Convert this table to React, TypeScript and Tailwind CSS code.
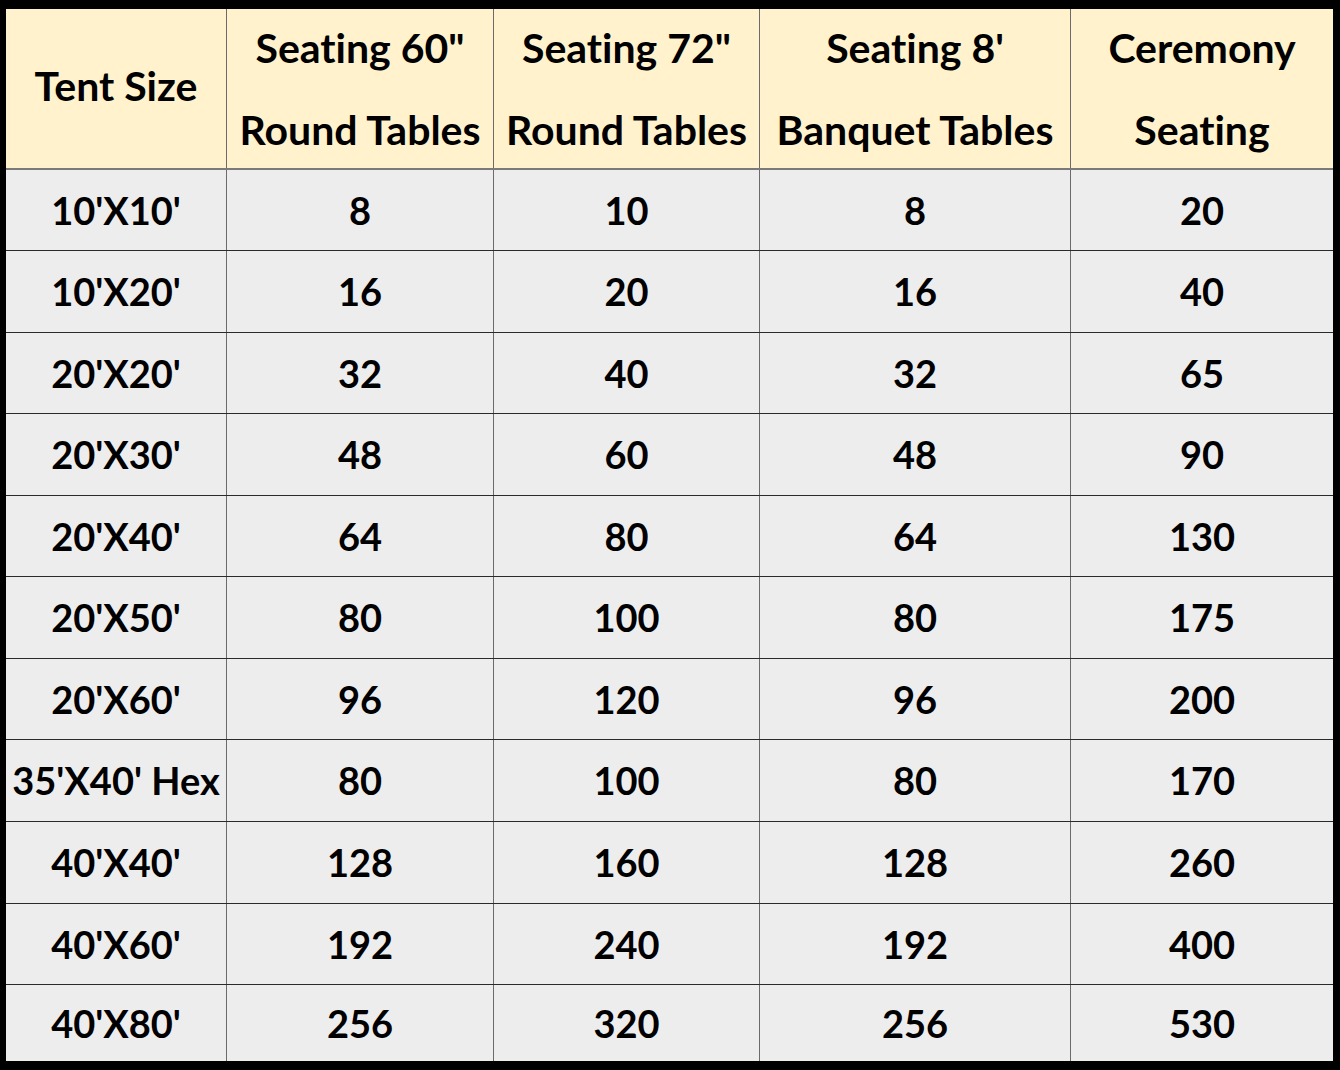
const columns = [
  { w: "w-[221px]", head: ["Tent Size"] },
  { w: "w-[267px]", head: ['Seating 60"', "Round Tables"] },
  { w: "w-[266px]", head: ['Seating 72"', "Round Tables"] },
  { w: "w-[311px]", head: ["Seating 8'", "Banquet Tables"] },
  { w: "w-[262px]", head: ["Ceremony", "Seating"] },
];

const rows: { h: string; cells: string[] }[] = [
  { h: "h-[81px]", cells: ["10'X10'", "8", "10", "8", "20"] },
  { h: "h-[82px]", cells: ["10'X20'", "16", "20", "16", "40"] },
  { h: "h-[81px]", cells: ["20'X20'", "32", "40", "32", "65"] },
  { h: "h-[82px]", cells: ["20'X30'", "48", "60", "48", "90"] },
  { h: "h-[81px]", cells: ["20'X40'", "64", "80", "64", "130"] },
  { h: "h-[82px]", cells: ["20'X50'", "80", "100", "80", "175"] },
  { h: "h-[81px]", cells: ["20'X60'", "96", "120", "96", "200"] },
  { h: "h-[82px]", cells: ["35'X40' Hex", "80", "100", "80", "170"] },
  { h: "h-[82px]", cells: ["40'X40'", "128", "160", "128", "260"] },
  { h: "h-[81px]", cells: ["40'X60'", "192", "240", "192", "400"] },
  { h: "h-[76px]", cells: ["40'X80'", "256", "320", "256", "530"] },
];

export default function App() {
  return (
    <div className="w-[1340px] h-[1070px] bg-black pt-[9px] pl-[6px] pr-[7px] pb-[9px] font-['Lato','Open_Sans',sans-serif] font-bold text-black [font-variant-ligatures:none]">
      <div className="flex flex-col w-[1327px]">
        <div className="flex h-[161px] bg-[#fff2cc] border-b-2 border-[#7a7a7a]">
          {columns.map((c, i) => (
            <div
              key={i}
              className={`${c.w} flex flex-col items-center justify-center text-[41px] leading-[82px] ${i === 0 ? "pb-[5px]" : ""} ${i < columns.length - 1 ? "border-r border-[#6b6b6b]" : ""}`}
            >
              {c.head.map((line) => (
                <span key={line} className="whitespace-nowrap">{line}</span>
              ))}
            </div>
          ))}
        </div>
        {rows.map((r, ri) => (
          <div
            key={ri}
            className={`flex ${r.h} bg-[#ededed] ${ri < rows.length - 1 ? "border-b border-[#2a2a2a]" : ""}`}
          >
            {r.cells.map((v, ci) => (
              <div
                key={ci}
                className={`${columns[ci].w} flex items-center justify-center text-[38px] whitespace-nowrap ${ci < 4 ? "border-r border-[#6b6b6b]" : ""}`}
              >
                {v}
              </div>
            ))}
          </div>
        ))}
      </div>
    </div>
  );
}
